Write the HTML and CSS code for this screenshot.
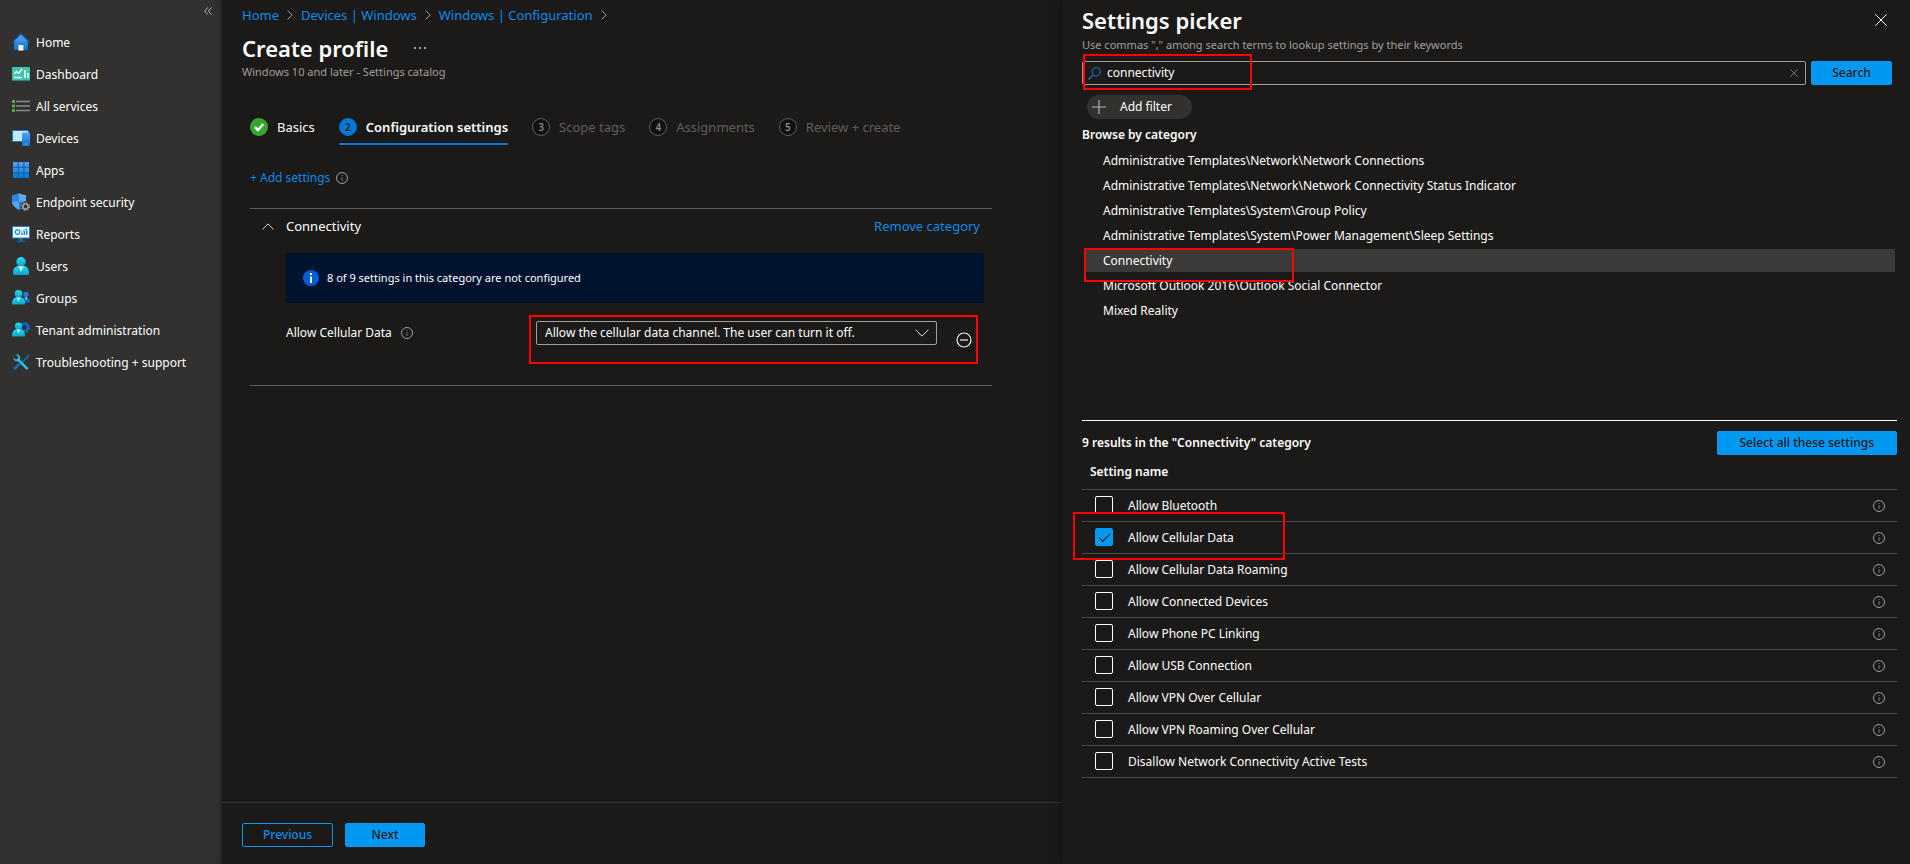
FILE: index.html
```html
<!DOCTYPE html>
<html lang="en">
<head>
    <meta charset="UTF-8">
    <meta name="viewport" content="width=device-width, initial-scale=1.0">
    <title>Create profile</title>
    <link rel="stylesheet" href="styles.css">
</head>
<body>
    <!-- shared icons and gradients -->
    <svg class="defs" aria-hidden="true">
        <defs>
            <linearGradient id="blue" x1="0" y1="0" x2="0" y2="1"><stop offset="0" stop-color="#5ea0ef"/><stop offset="1" stop-color="#0078d4"/></linearGradient>
            <linearGradient id="cyan" x1="0" y1="0" x2="0" y2="1"><stop offset="0" stop-color="#1fe0fa"/><stop offset="1" stop-color="#0aa2c4"/></linearGradient>
        </defs>
        <symbol id="info" viewBox="0 0 12 12">
            <circle cx="6" cy="6" r="5.5" fill="none" stroke="currentColor"/>
            <path d="M6 5v4M6 3v1" stroke="currentColor" opacity=".7"/>
        </symbol>
        <symbol id="cross" viewBox="0 0 12 12">
            <path d="M.3.3l11.4 11.4M11.7.3L.3 11.7" stroke="currentColor" fill="none"/>
        </symbol>
        <symbol id="next" viewBox="0 0 6 10">
            <path d="M.6.5L5.2 5 .6 9.5" stroke="currentColor" fill="none"/>
        </symbol>
    </svg>

    <div class="portal">
        <nav class="sidebar">
            <button class="collapse" aria-label="Collapse menu">
                <svg width="8" height="8" viewBox="0 0 8 8"><path d="M3.8.4L.6 4l3.2 3.6M7.6.4L4.4 4l3.2 3.6" stroke="#b5b3b1" fill="none"/></svg>
            </button>
            <ul>
                <li><a href="#">
                    <svg viewBox="0 0 18 18"><path d="M2.2 8.4V17h13.6V8.4L9 2.2z" fill="url(#blue)"/><path d="M0 9L9 0l9 9-1 1L9 2.8 1 10z" fill="#0f62ae"/><path d="M9 1.6L2.4 8h13.2z" fill="#4a97e8"/><path d="M6.4 12h5v5.6h-5z" fill="#f0f0f0"/></svg>
                    Home</a></li>
                <li><a href="#">
                    <svg viewBox="0 0 18 18"><rect y="2" width="18" height="14" rx="1" fill="#40c4b0"/><path d="M0 15h18v.5a.5.5 0 0 1-.5.5H.5a.5.5 0 0 1-.5-.5z" fill="#1e8a7d"/><path d="M2 9l2.6-2.6 2 1.8L10 4" stroke="#fff" stroke-width="1.4" fill="none"/><path d="M2 12.5h8M13 5v8M16 8v5" stroke="#e8fffb" stroke-width="1.5"/></svg>
                    Dashboard</a></li>
                <li><a href="#">
                    <svg viewBox="0 0 18 18"><path d="M4 4.5h14M4 9h14M4 13.5h14" stroke="#8c8a88" stroke-width="1.4"/><path d="M0 3h3v3H0zM0 7.500h3v3H0zM0 12h3v3H0z" fill="#4fae3a"/></svg>
                    All services</a></li>
                <li><a href="#">
                    <svg viewBox="0 0 18 18"><rect y="1" width="17" height="12" rx=".6" fill="#0f78d4"/><rect x="1" y="2" width="15" height="10" fill="#c3ebfb"/><rect x="10" y="3.500" width="8" height="13.500" rx=".7" fill="url(#blue)"/><rect x="13.500" y="14.500" width="1.200" height="1.200" fill="#cde8ff"/></svg>
                    Devices</a></li>
                <li><a href="#">
                    <svg viewBox="0 0 18 18"><rect x="1" y="1" width="16" height="16" fill="#0a5ba8"/><path d="M1 1h4.700v4.700H1zM6.700 1h4.700v4.700H6.700zM12.400 1H17v4.700h-4.600zM1 6.700h4.700v4.700H1zM6.700 6.700h4.700v4.700H6.700zM12.400 6.700H17v4.700h-4.600zM1 12.400h4.700V17H1zM6.700 12.400h4.700V17H6.700zM12.400 12.400H17V17h-4.600z" fill="url(#blue)"/></svg>
                    Apps</a></li>
                <li><a href="#">
                    <svg viewBox="0 0 18 18"><path d="M7 0c2 1.500 4.500 2 7 2v6c0 4.500-4 7-7 9-3-2-7-4.500-7-9V2c2.500 0 5-.5 7-2z" fill="#1f7fdc"/><path d="M7 0v8.500H0V2c2.500 0 5-.5 7-2z" fill="#2b88e0"/><path d="M7 0c2 1.500 4.500 2 7 2v6.500H7z" fill="#63a9f2"/><path d="M7 8.500V17c-3-2-6.800-4.300-7-8.500z" fill="#5aa3ee"/><circle cx="13.500" cy="13.500" r="5" fill="#323130"/><circle cx="13.500" cy="13.500" r="2.600" fill="none" stroke="#9a9896" stroke-width="1.800"/><circle cx="13.500" cy="13.500" r="4" fill="none" stroke="#9a9896" stroke-width="1.200" stroke-dasharray="1.570"/></svg>
                    Endpoint security</a></li>
                <li><a href="#">
                    <svg viewBox="0 0 18 18"><path d="M7 13h4v3h2v1H5v-1h2z" fill="#1267b0"/><rect y="1" width="18" height="12.500" rx=".6" fill="#1b7fd0"/><rect x="1" y="2" width="16" height="10.500" fill="#fff"/><circle cx="5.500" cy="7" r="2.300" fill="none" stroke="#19a8dc" stroke-width="1.500"/><path d="M10 10V7.500M12.300 10V6M14.700 10V4.500" stroke="#1b7fd0" stroke-width="1.400"/><path d="M9.500 6.500L15 3.500" stroke="#32bedd"/></svg>
                    Reports</a></li>
                <li><a href="#">
                    <svg viewBox="0 0 18 18"><path d="M1 16c0-5 2.500-7.500 8-7.500s8 2.500 8 7.500c0 1-.5 2-1.500 2h-13C1.500 18 1 17 1 16z" fill="url(#cyan)"/><path d="M6.500 8.800L9 15l2.500-6.200z" fill="#e6fbff"/><circle cx="9" cy="4.700" r="4.700" fill="url(#cyan)"/></svg>
                    Users</a></li>
                <li><a href="#">
                    <svg viewBox="0 0 18 18"><circle cx="14" cy="5.500" r="2.700" fill="#1a7fe0"/><path d="M10 13.500c0-3.500 1.500-5 4-5s4 1.500 4 5z" fill="#0f6cd0"/><path d="M0 14.500C0 10.500 2 8 6.500 8s6.500 2.500 6.500 6.500c0 .6-.4 1-1 1H1c-.6 0-1-.4-1-1z" fill="url(#cyan)"/><path d="M4.800 8.300L6.500 12.500l1.700-4.200zM13 8.600l1 2.400 1-2.400z" fill="#e6fbff"/><circle cx="6.500" cy="4.800" r="3.800" fill="url(#cyan)"/></svg>
                    Groups</a></li>
                <li><a href="#">
                    <svg viewBox="0 0 18 18"><circle cx="12.500" cy="6.500" r="3.500" fill="none" stroke="#0f6cd0" stroke-width="2.200"/><circle cx="12.500" cy="6.500" r="5" fill="none" stroke="#0f6cd0" stroke-width="1.400" stroke-dasharray="1.960"/><path d="M0 14.500C0 10.500 2 8 6.500 8s6.500 2.500 6.500 6.500c0 .6-.4 1-1 1H1c-.6 0-1-.4-1-1z" fill="url(#cyan)"/><path d="M4.800 8.300L6.500 12.500l1.700-4.200z" fill="#e6fbff"/><circle cx="6.500" cy="5" r="3.600" fill="url(#cyan)"/></svg>
                    Tenant administration</a></li>
                <li><a href="#">
                    <svg viewBox="0 0 18 18"><path d="M16.500 1l1 1-1.500 2.500-8 8-1-1 8-8z" fill="#1277b8"/><path d="M3 17.200L1 15.300l5.500-5.200 1.700 1.800z" fill="#0f6cb8"/><path d="M5.500 1.200A4 4 0 0 1 7.800 6.500l8.700 8.700-1.700 1.900L6 8.300A4 4 0 0 1 1.200 4.300L3.600 6.500 5.800 6l.4-2.300-2.300-2.200z" fill="#27c3e6"/></svg>
                    Troubleshooting + support</a></li>
            </ul>
        </nav>

        <main class="profile">
            <div class="content">
                <nav class="breadcrumb">
                    <a href="#">Home</a>
                    <svg width="6" height="10"><use href="#next"/></svg>
                    <a href="#">Devices | Windows</a>
                    <svg width="6" height="10"><use href="#next"/></svg>
                    <a href="#">Windows | Configuration</a>
                    <svg width="6" height="10"><use href="#next"/></svg>
                </nav>
                <div class="title-row">
                    <h1>Create profile</h1>
                    <button class="more" aria-label="More actions">
                        <svg width="12" height="2" viewBox="0 0 12 2"><path d="M0 0h2v2H0zM5 0h2v2H5zM10 0h2v2h-2z" fill="#a5a3a1"/></svg>
                    </button>
                </div>
                <p class="subtitle">Windows 10 and later - Settings catalog</p>

                <ol class="steps">
                    <li class="done"><button>
                        <svg width="18" height="18" viewBox="0 0 18 18"><circle cx="9" cy="9" r="9" fill="#37a62f"/><path d="M5 9.200l3 2.800 5.300-6" stroke="#fff" stroke-width="2.400" fill="none"/></svg>
                        Basics</button></li>
                    <li class="current"><button><span class="number">2</span>Configuration settings</button></li>
                    <li><button><span class="number">3</span>Scope tags</button></li>
                    <li><button><span class="number">4</span>Assignments</button></li>
                    <li><button><span class="number">5</span>Review + create</button></li>
                </ol>

                <div class="add-settings">
                    <a href="#">+ Add settings</a>
                    <svg class="info" width="12" height="12"><use href="#info"/></svg>
                </div>

                <section class="category">
                    <div class="category-head">
                        <button class="toggle" aria-label="Collapse category">
                            <svg width="12" height="7" viewBox="0 0 12 7"><path d="M.4 6.500L6 .9l5.600 5.600" stroke="#e0dedc" fill="none"/></svg>
                        </button>
                        <h2>Connectivity</h2>
                        <a href="#">Remove category</a>
                    </div>
                    <div class="banner">
                        <svg width="16" height="16" viewBox="0 0 16 16"><circle cx="8" cy="8" r="8" fill="#015cda"/><path d="M7 6.500h2V13H7zM7 3h2v2H7z" fill="#fff"/></svg>
                        8 of 9 settings in this category are not configured
                    </div>
                    <div class="setting">
                        <label for="cellular">Allow Cellular Data</label>
                        <svg class="info" width="12" height="12"><use href="#info"/></svg>
                        <div class="setting-value marked">
                            <div class="select">
                                <select id="cellular">
                                    <option>Allow the cellular data channel. The user can turn it off.</option>
                                </select>
                                <svg width="14" height="8" viewBox="0 0 14 8"><path d="M.6.7L7 7.100 13.400.7" stroke="#e0dedc" fill="none"/></svg>
                            </div>
                            <button class="remove" aria-label="Remove setting">
                                <svg width="16" height="16" viewBox="0 0 16 16"><circle cx="8" cy="8" r="7" fill="none" stroke="#f3f2f1" stroke-width="1.200"/><path d="M4 8h8" stroke="#f3f2f1" stroke-width="1.200"/></svg>
                            </button>
                        </div>
                    </div>
                </section>
            </div>

            <footer>
                <button class="btn outline">Previous</button>
                <button class="btn">Next</button>
            </footer>
        </main>

        <aside class="picker">
            <header>
                <h1>Settings picker</h1>
                <button class="close" aria-label="Close"><svg width="12" height="12"><use href="#cross"/></svg></button>
            </header>
            <p class="subtitle" id="hint">Use commas "," among search terms to lookup settings by their keywords</p>

            <form class="search-row">
                <div class="search marked">
                    <svg width="13" height="13" viewBox="0 0 13 13"><circle cx="8.200" cy="4.800" r="4.200" fill="none" stroke="#0f86d8"/><path d="M5.200 7.800L.5 12.500" stroke="#0f86d8" stroke-width="1.200"/></svg>
                    <input type="text" value="connectivity" aria-label="Search settings" aria-describedby="hint">
                    <button type="button" class="clear" aria-label="Clear"><svg width="8" height="8"><use href="#cross"/></svg></button>
                </div>
                <button type="button" class="btn">Search</button>
            </form>

            <button class="filter">
                <svg width="14" height="14" viewBox="0 0 14 14"><path d="M0 7h14M7 0v14" stroke="#b5b3b1" stroke-width="1.200"/></svg>
                Add filter
            </button>

            <h2>Browse by category</h2>
            <ul class="categories">
                <li><button>Administrative Templates\Network\Network Connections</button></li>
                <li><button>Administrative Templates\Network\Network Connectivity Status Indicator</button></li>
                <li><button>Administrative Templates\System\Group Policy</button></li>
                <li><button>Administrative Templates\System\Power Management\Sleep Settings</button></li>
                <li class="selected marked"><button>Connectivity</button></li>
                <li><button>Microsoft Outlook 2016\Outlook Social Connector</button></li>
                <li><button>Mixed Reality</button></li>
            </ul>

            <div class="results-head">
                <h2>9 results in the "Connectivity" category</h2>
                <button class="btn">Select all these settings</button>
            </div>
            <table class="results">
                <thead>
                    <tr><th colspan="3">Setting name</th></tr>
                </thead>
                <tbody>
                    <tr><td><input type="checkbox" id="s1"></td><td><label for="s1">Allow Bluetooth</label></td><td><svg class="info" width="12" height="12"><use href="#info"/></svg></td></tr>
                    <tr class="marked"><td><input type="checkbox" id="s2" checked></td><td><label for="s2">Allow Cellular Data</label></td><td><svg class="info" width="12" height="12"><use href="#info"/></svg></td></tr>
                    <tr><td><input type="checkbox" id="s3"></td><td><label for="s3">Allow Cellular Data Roaming</label></td><td><svg class="info" width="12" height="12"><use href="#info"/></svg></td></tr>
                    <tr><td><input type="checkbox" id="s4"></td><td><label for="s4">Allow Connected Devices</label></td><td><svg class="info" width="12" height="12"><use href="#info"/></svg></td></tr>
                    <tr><td><input type="checkbox" id="s5"></td><td><label for="s5">Allow Phone PC Linking</label></td><td><svg class="info" width="12" height="12"><use href="#info"/></svg></td></tr>
                    <tr><td><input type="checkbox" id="s6"></td><td><label for="s6">Allow USB Connection</label></td><td><svg class="info" width="12" height="12"><use href="#info"/></svg></td></tr>
                    <tr><td><input type="checkbox" id="s7"></td><td><label for="s7">Allow VPN Over Cellular</label></td><td><svg class="info" width="12" height="12"><use href="#info"/></svg></td></tr>
                    <tr><td><input type="checkbox" id="s8"></td><td><label for="s8">Allow VPN Roaming Over Cellular</label></td><td><svg class="info" width="12" height="12"><use href="#info"/></svg></td></tr>
                    <tr><td><input type="checkbox" id="s9"></td><td><label for="s9">Disallow Network Connectivity Active Tests</label></td><td><svg class="info" width="12" height="12"><use href="#info"/></svg></td></tr>
                </tbody>
            </table>
        </aside>
    </div>
</body>
</html>
```
FILE: styles.css
```css
*, *::before, *::after {
    box-sizing: border-box;
}

body {
    margin: 0;
    background-color: #1b1a19;
    color: #fff;
    font-family: "Noto Sans", "Open Sans", sans-serif;
    font-size: 12px;
    line-height: 18px;
}

h1, h2, p, ul, ol {
    margin: 0;
    padding: 0;
}

ul, ol {
    list-style: none;
}

a {
    color: #0a8bec;
    text-decoration: none;
}

a:hover {
    text-decoration: underline;
}

svg {
    flex: none;
    display: block;
}

button, input, select {
    font: inherit;
    color: inherit;
    background: none;
    border: none;
    padding: 0;
    margin: 0;
}

button {
    cursor: pointer;
}

h1 {
    font-size: 22px;
    font-weight: 600;
    line-height: 32px;
}

h2 {
    font-size: 12px;
    font-weight: 600;
}

.defs {
    position: absolute;
    width: 0;
    height: 0;
}

.info {
    color: #a19f9d;
}

.subtitle {
    font-size: 11px;
    line-height: 16px;
    color: #a19f9d;
}

.btn {
    height: 24px;
    padding: 0 20px;
    background-color: #0098f0;
    border: 1px solid #0098f0;
    border-radius: 2px;
    color: #1b1a19;
    font-weight: 500;
    line-height: 20px;
}

.btn:hover {
    background-color: #2aa8f5;
}

.btn.outline {
    background: none;
    color: #0a8bec;
}

/* red highlight frames */
.marked {
    position: relative;
}

.marked::after {
    content: "";
    position: absolute;
    border: 2px solid #f00;
    pointer-events: none;
}

.portal {
    display: flex;
    min-height: 100vh;
}

/* left menu */
.sidebar {
    flex: none;
    width: 222px;
    background-color: #323130;
    box-shadow: inset -6px 0 6px -6px rgba(0, 0, 0, 0.5);
}

.collapse {
    display: block;
    margin: 7px 10px 11px auto;
}

.sidebar a {
    display: flex;
    align-items: center;
    gap: 6px;
    height: 32px;
    padding: 2px 0 0 12px;
    color: #fff;
}

.sidebar a svg {
    width: 18px;
    height: 18px;
    margin-bottom: 2px;
}

/* profile blade */
.profile {
    flex: 1;
    min-width: 0;
    display: flex;
    flex-direction: column;
}

.content {
    flex: 1;
    padding: 6px 20px 0;
}

.breadcrumb {
    display: flex;
    align-items: center;
    gap: 8px;
    font-size: 13px;
    color: #a19f9d;
}

.title-row {
    display: flex;
    align-items: center;
    gap: 26px;
    margin-top: 8px;
}

.steps {
    display: flex;
    gap: 24px;
    margin: 34px 8px 0;
    font-size: 13px;
    color: #605e5c;
}

.steps button {
    display: flex;
    align-items: center;
    gap: 9px;
    height: 31px;
    padding-bottom: 4px;
    border-bottom: 2px solid transparent;
}

.steps .done {
    color: #fff;
}

.steps .current {
    color: #fff;
    font-weight: 600;
}

.steps .current button {
    border-color: #0078d4;
}

.number {
    width: 18px;
    height: 18px;
    border: 1px solid #605e5c;
    border-radius: 50%;
    background-color: #111;
    color: #8a8886;
    font-size: 10px;
    font-weight: 600;
    line-height: 16px;
    text-align: center;
}

.current .number {
    background-color: #0078d4;
    border-color: #0078d4;
    color: #1b1a19;
}

.add-settings {
    display: flex;
    align-items: center;
    gap: 6px;
    margin: 24px 8px 0;
}

.category {
    max-width: 742px;
    margin: 21px 8px 0;
    padding: 8px 8px 0 12px;
    border-top: 1px solid #605e5c;
    border-bottom: 1px solid #605e5c;
}

.category-head {
    display: flex;
    align-items: center;
    gap: 12px;
    padding-right: 4px;
}

.category-head h2 {
    flex: 1;
    font-size: 13px;
    font-weight: 400;
}

.category-head a {
    font-size: 13px;
}

.banner {
    display: flex;
    align-items: center;
    gap: 8px;
    height: 50px;
    margin: 18px 0 0 24px;
    padding-left: 17px;
    background-color: #00132e;
    border-radius: 2px;
    font-size: 11px;
}

.setting {
    display: flex;
    align-items: center;
    height: 60px;
    margin: 0 0 22px 24px;
}

.setting .info {
    margin-left: 9px;
}

.setting-value {
    display: flex;
    align-items: flex-start;
    gap: 19px;
    height: 24px;
    margin: 0 12px 0 auto;
}

.setting-value.marked::after {
    top: -6px;
    left: -7px;
    right: -6px;
    bottom: -19px;
}

.select {
    position: relative;
    width: 401px;
}

.select select {
    width: 100%;
    height: 24px;
    padding: 0 30px 0 8px;
    border: 1px solid #a19f9d;
    border-radius: 2px;
    appearance: none;
}

.select select option {
    background-color: #1b1a19;
}

.select svg {
    position: absolute;
    top: 8px;
    right: 8px;
    pointer-events: none;
}

.remove {
    margin-top: 11px;
}

footer {
    display: flex;
    gap: 12px;
    height: 62px;
    padding: 20px;
    border-top: 1px solid #323130;
}

footer .btn {
    min-width: 80px;
}

/* settings picker blade */
.picker {
    flex: none;
    width: 848px;
    padding: 4px 13px 0 20px;
    background-color: #1b1a19;
    box-shadow: 0 0 8px rgba(0, 0, 0, 0.5);
}

.picker header {
    display: flex;
    justify-content: space-between;
    align-items: center;
    margin-bottom: 1px;
    padding-right: 10px;
}

.search-row {
    display: flex;
    gap: 5px;
    margin: 8px 5px 0 0;
}

.search-row .btn {
    width: 81px;
}

.search {
    flex: 1;
    display: flex;
    align-items: center;
    gap: 6px;
    height: 24px;
    padding: 0 7px 0 5px;
    border: 1px solid #a19f9d;
    border-radius: 2px;
}

.search.marked::after {
    top: -8px;
    left: 0;
    width: 169px;
    height: 36px;
}

.search input {
    flex: 1;
    outline: none;
}

.clear {
    color: #a19f9d;
}

.filter {
    display: flex;
    align-items: center;
    gap: 14px;
    height: 24px;
    margin: 10px 0 7px 5px;
    padding: 0 20px 0 5px;
    background-color: #323130;
    border-radius: 12px;
}

.categories {
    height: 271px;
    margin-top: 5px;
    padding-right: 2px;
}

.categories li {
    margin: 0 0 2px 2px;
}

.categories button {
    width: 100%;
    height: 23px;
    padding: 1px 0 0 19px;
    text-align: left;
}

.categories .selected {
    background-color: #3b3a39;
}

.categories .marked::after {
    top: -1px;
    left: 0;
    width: 210px;
    height: 34px;
}

.results-head {
    display: flex;
    justify-content: space-between;
    align-items: center;
    padding: 10px 0 5px;
    border-top: 1px solid #fff;
}

.results-head .btn {
    padding: 0 22px;
}

.results {
    width: 100%;
    border-collapse: collapse;
}

.results th {
    height: 29px;
    padding: 0 8px 5px;
    font-weight: 600;
    text-align: left;
}

.results tbody tr {
    height: 32px;
    border-top: 1px solid #484644;
}

.results tbody tr:last-child {
    border-bottom: 1px solid #484644;
}

.results td {
    padding: 2px 0 0;
}

.results td:first-child {
    width: 46px;
    padding: 0 0 0 13px;
}

.results td:last-child {
    width: 24px;
}

.results label {
    display: block;
}

.results .marked::after {
    top: -10px;
    left: -9px;
    width: 212px;
    height: 48px;
}

.results input {
    display: block;
    width: 18px;
    height: 18px;
    border: 1px solid #fff;
    border-radius: 2px;
    appearance: none;
}

.results input:checked {
    background-color: #0098f0;
    border-color: #0098f0;
}

.results input:checked::before {
    content: "";
    display: block;
    width: 11px;
    height: 6px;
    margin: 4px 3px;
    border-left: 1px solid #1b1a19;
    border-bottom: 1px solid #1b1a19;
    transform: rotate(-45deg);
}
```
